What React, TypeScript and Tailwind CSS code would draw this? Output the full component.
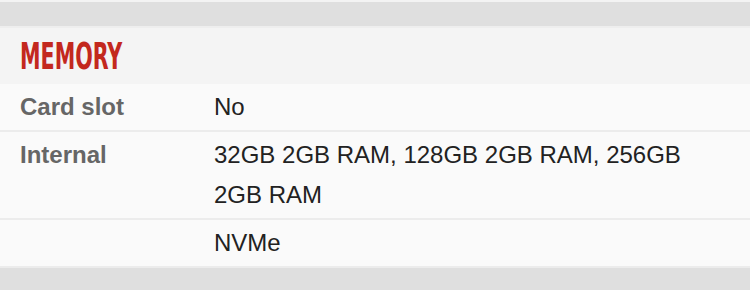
import React from "react";

const rows: { label: string; value: string }[] = [
  { label: "Card slot", value: "No" },
  { label: "Internal", value: "32GB 2GB RAM, 128GB 2GB RAM, 256GB 2GB RAM" },
  { label: "", value: "NVMe" },
];

export default function App() {
  return (
    <div className="w-[750px] h-[290px] bg-[#dfdfdf] overflow-hidden" style={{ fontFamily: '"Liberation Sans", Arial, sans-serif' }}>
      <div className="h-[2px] bg-[#f3f3f3]" />
      <div className="h-[24px]" />
      <div className="h-[58px] bg-[#f4f4f4] border-t-2 border-[#eeeeee] px-[20px] flex items-center">
        <h2
          className="origin-left scale-x-[0.62] text-[37px] leading-none font-bold text-[#c3281e]"
          style={{ fontFamily: '"DejaVu Sans Condensed", "Liberation Sans", sans-serif' }}
        >
          MEMORY
        </h2>
      </div>
      {rows.map((r, i) => (
        <div key={i} className="flex bg-[#fafafa] border-b-2 border-[#ececec] pl-[20px] pr-[20px] py-[3px]">
          <div className="w-[194px] shrink-0 text-[24px] leading-[40px] font-bold text-[#666666]">{r.label}</div>
          <div className="flex-1 text-[24px] leading-[40px] text-[#222222]">{r.value}</div>
        </div>
      ))}
    </div>
  );
}
